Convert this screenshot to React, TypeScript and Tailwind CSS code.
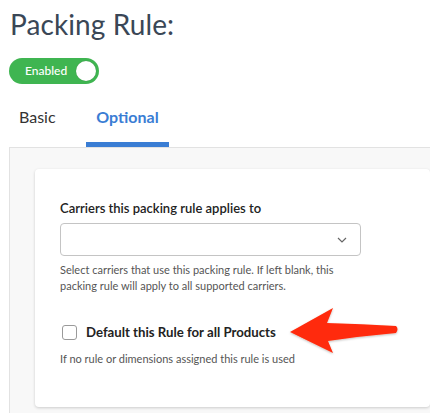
import React from "react";

export default function App() {
  return (
    <div
      className="relative w-[430px] h-[413px] overflow-hidden bg-white"
      style={{ fontFamily: "Lato, 'Open Sans', sans-serif" }}
    >
      <div className="pl-[10px] pt-[6px]">
        <h1 className="text-[28px] font-normal leading-[36px] text-[#3a4756] tracking-[0.1px]">
          Packing Rule:
        </h1>
      </div>
      <div className="pl-[9px] mt-[16px]">
        <div className="w-[90px] h-[26px] rounded-full bg-[#3fb551] flex items-center justify-between pl-[16px] pr-[3px]">
          <span className="text-white text-[12px] font-medium">Enabled</span>
          <span className="w-[20px] h-[20px] rounded-full bg-white shadow-[0_0_1px_rgba(0,0,0,0.3)]" />
        </div>
      </div>
      <div className="flex mt-[19px] pl-[19px] h-[44px]">
        <div className="w-[67px] pt-[3px] text-[16px] leading-[22px] text-[#333]">
          <span>Basic</span>
        </div>
        <div className="w-[83px] flex flex-col items-center">
          <span className="pt-[3px] text-[16px] leading-[22px] font-bold text-[#3a7dd4] flex-1">Optional</span>
          <div className="w-full h-[5px] bg-[#3a7dd4]" />
        </div>
      </div>
      <div className="ml-[9px] border-t border-l border-[#e2e2e2] bg-[#f8f8f8] pl-[25px] pt-[21px] h-[300px]">
        <div className="bg-white rounded-[4px] shadow-[0_1px_3px_rgba(0,0,0,0.18)] h-[238px] pl-[25px] pt-[31px]">
          <div className="text-[13px] font-semibold text-[#222] leading-[16px]">
            Carriers this packing rule applies to
          </div>
          <div className="mt-[7px] w-[301px] h-[33px] rounded-[4px] border border-[#c4c4c4] flex items-center justify-end pr-[13px]">
            <svg width="10" height="6" viewBox="0 0 10 6" fill="none" stroke="#666" strokeWidth="1.2">
              <path d="M1 1 L5 5 L9 1" />
            </svg>
          </div>
          <div className="mt-[6px] text-[11px] leading-[16px] text-[#555] w-[285px]">
            Select carriers that use this packing rule. If left blank, this packing rule will apply to all supported carriers.
          </div>
          <div className="mt-[29px] flex items-center">
            <span className="ml-[2px] w-[15px] h-[15px] rounded-[3px] border border-[#9a9a9a] bg-white" />
            <span className="ml-[9px] text-[13.2px] font-bold text-[#222]">Default this Rule for all Products</span>
          </div>
          <div className="mt-[8px] text-[11px] leading-[16px] text-[#555]">
            If no rule or dimensions assigned this rule is used
          </div>
        </div>
      </div>
      <svg
        className="absolute left-0 top-0 pointer-events-none"
        width="430"
        height="413"
        viewBox="0 0 430 413"
      >
        <defs>
          <filter id="sh" x="-20%" y="-20%" width="140%" height="140%">
            <feDropShadow dx="0" dy="1" stdDeviation="1" floodColor="#000" floodOpacity="0.25" />
          </filter>
        </defs>
        <path
          d="M290 332 L333 308 L327 323 Q362 324 396 326 Q399 329 396 333 Q362 336 328 341 L333 353 Z"
          fill="#ff2a0a"
          filter="url(#sh)"
        />
      </svg>
    </div>
  );
}
